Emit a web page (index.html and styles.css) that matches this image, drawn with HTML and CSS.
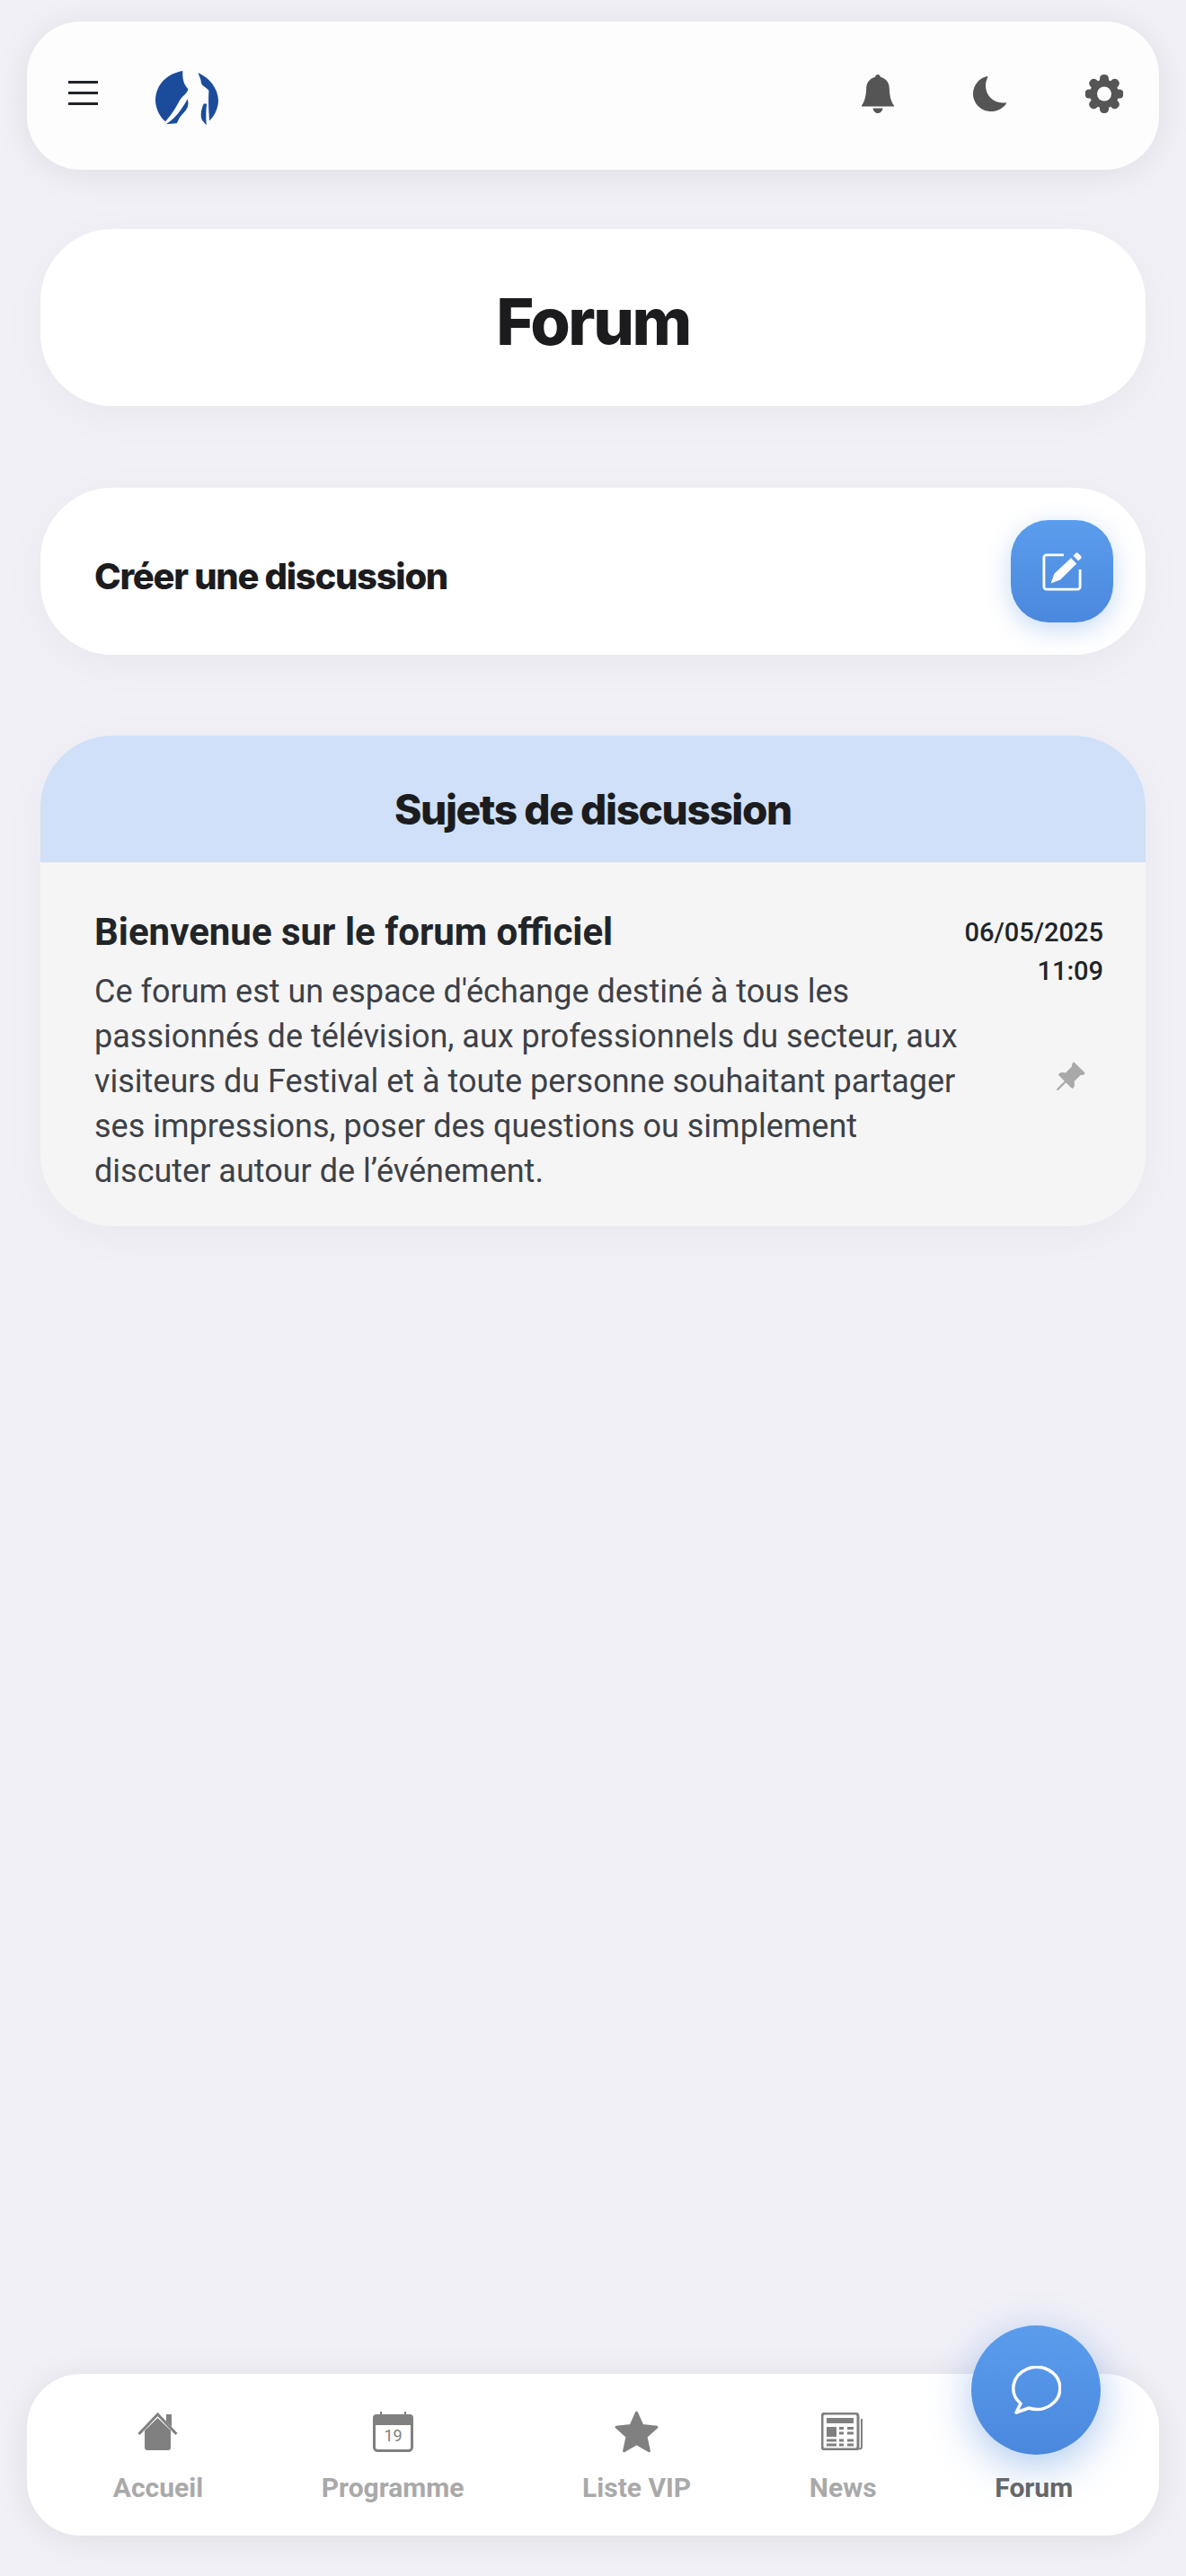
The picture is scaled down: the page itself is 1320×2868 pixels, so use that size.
FILE: index.html
```
<!DOCTYPE html>
<html lang="fr">

<head>
    <meta charset="utf-8">
    <title>Forum</title>
    <link rel="stylesheet" href="styles.css">
</head>

<body>
    <div class="page">

        <header class="topbar">
            <div class="topbar-left">
                <button class="burger" aria-label="Menu"><span></span><span></span><span></span></button>
                <svg class="logo" viewBox="68 57 212 188">
                    <path d="M160 62C110 70 70 105 68 160C68 190 85 220 102 232C120 210 135 190 150 160C160 145 178 135 178 122C165 110 158 90 160 62Z" />
                    <path d="M176 156C180 170 180 180 170 195L150 218L140 238L104 241C130 225 155 195 176 156Z" />
                    <path d="M212 68C250 85 278 120 280 160C280 190 265 215 250 230C247 190 246 160 248 128C240 115 225 115 222 100C222 90 215 80 212 68Z" />
                    <path d="M231 172C222 190 218 215 226 228L240 245C238 220 238 195 241 172Z" />
                </svg>
            </div>
            <div class="topbar-right">
                <svg class="top-icon" width="36" height="43" viewBox="0 0 36 43">
                    <path d="M18 0c1.600 0 2.800 1.200 2.900 2.800C27 4.200 30.600 9 30.800 15c.3 7.500 1.200 14 5.200 19.500v1H0v-1C4 29 4.900 22.500 5.200 15 5.400 9 9 4.200 15.100 2.800 15.200 1.200 16.400 0 18 0z" />
                    <path d="M12.500 37.500h11c-.5 3.300-2.800 5.500-5.500 5.500s-5-2.200-5.500-5.500z" />
                </svg>
                <svg class="top-icon" width="37" height="39" viewBox="0 0 37 39">
                    <path d="M15.500 0c.8 0 1.100.8.700 1.500C14.600 4.500 14 7.600 14 10.500c0 10.500 8.500 19 19 19 1 0 2-.1 3-.3.800-.2 1.300.6.800 1.200C33.200 35.700 27 39 20 39 9 39 0 30.300 0 19.500 0 10 6.600 2 15.500 0z" />
                </svg>
                <svg class="top-icon" width="42" height="43" viewBox="-21 -21.500 42 43">
                    <g>
                        <circle r="16" />
                        <rect x="-5" y="-21.500" width="10" height="43" rx="4.500" />
                        <rect x="-5" y="-21.500" width="10" height="43" rx="4.500" transform="rotate(45)" />
                        <rect x="-5" y="-21.500" width="10" height="43" rx="4.500" transform="rotate(90)" />
                        <rect x="-5" y="-21.500" width="10" height="43" rx="4.500" transform="rotate(135)" />
                    </g>
                    <circle class="gear-hole" r="8" />
                </svg>
            </div>
        </header>

        <main class="content">
            <section class="card title-card">
                <h1>Forum</h1>
            </section>

            <section class="card create-card">
                <h2>Créer une discussion</h2>
                <button class="create-btn" aria-label="Créer">
                    <svg width="44" height="44" viewBox="0 0 46 46">
                        <path class="edit-box" d="M25 4H5a3 3 0 0 0-3 3v34a3 3 0 0 0 3 3h36a3 3 0 0 0 3-3V21" />
                        <path class="edit-pen" d="M33.500 7.500l6.500 6.500-19 19-11 4 4-11zM36 5l3-3c.8-.8 2-.8 2.800 0l3.200 3.200c.8.8.8 2 0 2.800l-3 3z" />
                    </svg>
                </button>
            </section>

            <section class="topics">
                <h2 class="topics-head">Sujets de discussion</h2>
                <article class="topic">
                    <div class="topic-main">
                        <h3>Bienvenue sur le forum officiel</h3>
                        <p>Ce forum est un espace d'échange destiné à tous les passionnés de télévision, aux professionnels du secteur, aux visiteurs du Festival et à toute personne souhaitant partager ses impressions, poser des questions ou simplement discuter autour de l’événement.</p>
                    </div>
                    <div class="topic-side">
                        <div class="topic-date">06/05/2025<br>11:09</div>
                        <svg class="pin" width="36" height="36" viewBox="0 0 16 16">
                            <path d="M9.828.722a.5.5 0 0 1 .354.146l4.950 4.950a.5.500 0 0 1 0 .707c-.48.480-1.072.588-1.503.588-.177 0-.335-.018-.46-.039l-3.134 3.134a6 6 0 0 1 .16 1.013c.046.702-.032 1.687-.72 2.375a.5.500 0 0 1-.707 0l-2.829-2.828-3.182 3.182c-.195.195-1.219.902-1.414.707s.512-1.220.707-1.414l3.182-3.182-2.828-2.829a.5.500 0 0 1 0-.707c.688-.688 1.673-.767 2.375-.72a6 6 0 0 1 1.013.16l3.134-3.133a3 3 0 0 1-.04-.461c0-.43.108-1.022.589-1.503a.5.500 0 0 1 .353-.146" />
                        </svg>
                    </div>
                </article>
            </section>
        </main>

        <nav class="bottombar">
            <a class="nav-item">
                <div class="nav-icon">
                    <svg width="45" height="42" viewBox="0 0 45 42">
                        <path class="nav-fill" d="M22.500 6L37 20v19a3 3 0 0 1-3 3H11a3 3 0 0 1-3-3V20z" />
                        <path class="nav-line" d="M1.500 24L22.500 2 43.500 24" />
                        <path class="nav-fill" d="M32 2h6v14l-6-6z" />
                    </svg>
                </div>
                <span class="nav-label">Accueil</span>
            </a>
            <a class="nav-item">
                <div class="nav-icon">
                    <svg width="45" height="45" viewBox="0 0 45 45">
                        <rect class="nav-fill" x="0" y="3" width="45" height="12" rx="4" />
                        <rect class="nav-fill" x="8" y="0" width="2" height="5" />
                        <rect class="nav-fill" x="35" y="0" width="2" height="5" />
                        <rect class="cal-box" x="1.500" y="4.500" width="42" height="39" rx="4" />
                        <text class="cal-day" x="22.500" y="33">19</text>
                    </svg>
                </div>
                <span class="nav-label">Programme</span>
            </a>
            <a class="nav-item">
                <div class="nav-icon">
                    <svg width="51" height="49" viewBox="0 0 51 49">
                        <path class="nav-fill nav-round" d="M25.500 3l6.500 14.500 16 1.700-12 10.800 3.400 15.800-13.900-8.100-13.900 8.100 3.400-15.800-12-10.800 16-1.700z" />
                    </svg>
                </div>
                <span class="nav-label">Liste VIP</span>
            </a>
            <a class="nav-item">
                <div class="nav-icon">
                    <svg width="48" height="42" viewBox="0 0 48 42">
                        <path class="news-back" d="M45 7v31a2.500 2.500 0 0 1-2.500 2.500H40" />
                        <rect class="cal-box" x="1" y="1" width="40" height="40" rx="3" />
                        <rect class="nav-fill" x="6" y="6" width="30" height="6" />
                        <rect class="nav-fill" x="6" y="16" width="11" height="11" />
                        <path class="news-rows" d="M20 17.500h5M29 17.500h7M20 23h5M29 23h7M6 31h11M20 31h5M29 31h7M6 36h11M20 36h5M29 36h7" />
                    </svg>
                </div>
                <span class="nav-label">News</span>
            </a>
            <a class="nav-item nav-active">
                <div class="nav-icon"></div>
                <span class="fab">
                    <svg width="56" height="54" viewBox="0 0 56 54">
                        <path d="M11 42A26 23.500 0 1 1 20 47L6 52Z" />
                    </svg>
                </span>
                <span class="nav-label">Forum</span>
            </a>
        </nav>

    </div>
</body>

</html>
```

FILE: styles.css
```
* {
    box-sizing: border-box;
}

html,
body {
    margin: 0;
    height: 100%;
}

body {
    background-color: #f1f0f7;
    font-family: Roboto, "Liberation Sans", sans-serif;
    color: #212529;
}

.page {
    display: flex;
    flex-direction: column;
    height: 2868px;
    padding: 24px 30px 45px;
}

.topbar {
    display: flex;
    justify-content: space-between;
    align-items: center;
    height: 165px;
    padding: 0 40px 0 46px;
    background-color: #fdfdfe;
    border-radius: 60px;
    box-shadow: 0 4px 40px rgba(0, 0, 0, 0.08);
}

.topbar-left {
    display: flex;
    align-items: center;
    gap: 64px;
}

.burger {
    display: flex;
    flex-direction: column;
    gap: 9px;
    width: 33px;
    padding: 0;
    margin-top: -6px;
    border: none;
    background: none;
}

.burger span {
    display: block;
    height: 3px;
    background-color: #212529;
}

.logo {
    width: 70px;
    height: 63px;
    fill: #1b4c9c;
    margin-top: 4px;
}

.topbar-right {
    display: flex;
    align-items: center;
    gap: 88px;
    margin-top: -4px;
}

.top-icon {
    display: block;
    fill: #555555;
}

.gear-hole {
    fill: #fdfdfe;
}

.content {
    display: flex;
    flex-direction: column;
    margin: 66px 15px 0;
}

.card {
    background-color: #ffffff;
    border-radius: 80px;
    box-shadow: 0 10px 50px rgba(0, 0, 0, 0.04);
}

.title-card {
    display: flex;
    justify-content: center;
    align-items: center;
    height: 197px;
    padding-top: 8px;
}

.title-card h1 {
    margin: 0;
    font-family: Inter, sans-serif;
    font-size: 72px;
    font-weight: 800;
    letter-spacing: -2.4px;
    color: #1c1c1e;
}

.create-card {
    display: flex;
    justify-content: space-between;
    align-items: center;
    height: 186px;
    margin-top: 91px;
    padding: 0 36px 0 60px;
}

.create-card h2 {
    margin: 10px 0 0;
    font-family: Inter, sans-serif;
    font-size: 40px;
    font-weight: 800;
    letter-spacing: -1.3px;
    color: #1c1c1e;
}

.create-btn {
    display: flex;
    justify-content: center;
    align-items: center;
    width: 114px;
    height: 114px;
    padding: 0;
    border: none;
    border-radius: 42px;
    background: linear-gradient(180deg, #5b9ded, #4a88dd);
    box-shadow: 0 8px 28px rgba(74, 136, 221, 0.3);
}

.edit-box {
    fill: none;
    stroke: #ffffff;
    stroke-width: 3;
}

.edit-pen {
    fill: #ffffff;
}

.topics {
    margin-top: 90px;
    border-radius: 80px;
    overflow: hidden;
    background-color: #f5f5f5;
    box-shadow: 0 10px 50px rgba(0, 0, 0, 0.04);
}

.topics-head {
    margin: 0;
    height: 141px;
    line-height: 164px;
    text-align: center;
    background-color: #cfe0f8;
    font-family: Inter, sans-serif;
    font-size: 46px;
    font-weight: 800;
    letter-spacing: -1.4px;
    color: #1c1c1e;
}

.topic {
    display: flex;
    height: 405px;
    padding: 53px 47px 0 60px;
}

.topic-main {
    width: 975px;
}

.topic-main h3 {
    margin: 0;
    font-size: 42px;
    line-height: 50px;
    font-weight: 700;
    color: #212529;
}

.topic-main p {
    margin: 16px 0 0;
    font-size: 36px;
    line-height: 50px;
    color: #3d4147;
}

.topic-side {
    flex: 1;
    display: flex;
    flex-direction: column;
    align-items: flex-end;
}

.topic-date {
    margin-top: 4px;
    font-size: 29px;
    line-height: 43px;
    font-weight: 500;
    text-align: right;
    white-space: nowrap;
    color: #212529;
}

.pin {
    margin: 78px 19px 0 0;
    fill: #a9a9a9;
}

.bottombar {
    display: flex;
    justify-content: space-around;
    margin-top: auto;
    height: 180px;
    padding: 40px 30px 0;
    background-color: #ffffff;
    border-radius: 60px;
    box-shadow: 0 4px 40px rgba(0, 0, 0, 0.08);
}

.nav-item {
    position: relative;
    display: flex;
    flex-direction: column;
    align-items: center;
    font-size: 30px;
    font-weight: 700;
    color: #a9a9a9;
}

.nav-label {
    margin-top: 21px;
    line-height: 36px;
    white-space: nowrap;
}

.nav-icon {
    display: flex;
    justify-content: center;
    align-items: center;
    height: 48px;
}

.nav-fill {
    fill: #808080;
}

.nav-round {
    stroke: #808080;
    stroke-width: 3;
    stroke-linejoin: round;
}

.nav-line {
    fill: none;
    stroke: #808080;
    stroke-width: 3;
}

.cal-box {
    fill: none;
    stroke: #808080;
    stroke-width: 3;
}

.cal-day {
    font-family: Roboto, sans-serif;
    font-size: 18px;
    font-weight: 400;
    text-anchor: middle;
    fill: #808080;
}

.news-back {
    fill: none;
    stroke: #808080;
    stroke-width: 2;
}

.news-rows {
    fill: none;
    stroke: #808080;
    stroke-width: 3;
}

.nav-active {
    color: #666666;
}

.fab {
    position: absolute;
    top: -94px;
    left: 50%;
    display: flex;
    justify-content: center;
    align-items: center;
    width: 144px;
    height: 144px;
    margin-left: -70px;
    border-radius: 50%;
    background: linear-gradient(180deg, #5b9ded, #4a88dd);
    box-shadow: 0 12px 48px rgba(74, 136, 221, 0.45);
}

.fab path {
    fill: none;
    stroke: #ffffff;
    stroke-width: 3.500;
    stroke-linejoin: round;
}
```
